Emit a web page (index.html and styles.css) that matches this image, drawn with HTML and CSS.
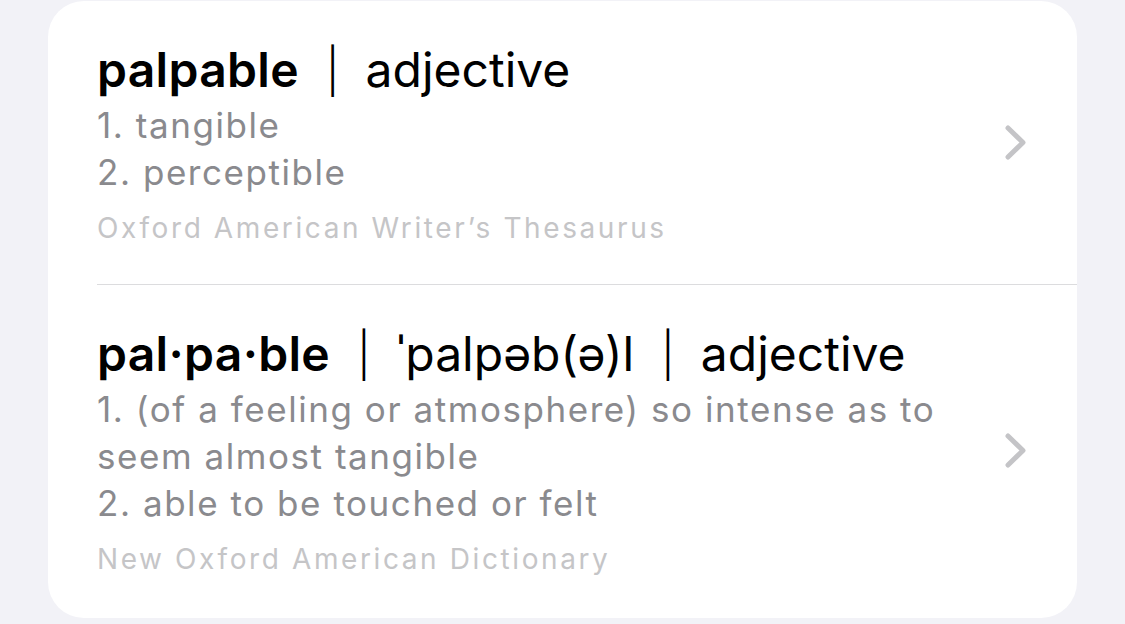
FILE: index.html
```html
<!DOCTYPE html>
<html>
<head>
<meta charset="utf-8">
<link rel="stylesheet" href="styles.css">
</head>
<body>
<div class="card">
  <div class="row row-first">
    <div class="entry">
      <div class="title"><span class="word">palpable</span><span class="bar">|</span><span class="pos">adjective</span></div>
      <div class="def">1. tangible</div>
      <div class="def">2. perceptible</div>
      <div class="source">Oxford American Writer’s Thesaurus</div>
    </div>
    <svg class="chev" width="21" height="35" viewBox="0 0 21 35"><polyline points="3,3 18,17.5 3,32" fill="none" stroke="#c4c4c7" stroke-width="5" stroke-linecap="round" stroke-linejoin="round"/></svg>
  </div>
  <div class="row">
    <div class="entry">
      <div class="title"><span class="word">pal·pa·ble</span><span class="bar">|</span><span class="pos pron">ˈpalpəb(ə)l</span><span class="bar">|</span><span class="pos">adjective</span></div>
      <div class="def">1. (of a feeling or atmosphere) so intense as to seem almost tangible</div>
      <div class="def">2. able to be touched or felt</div>
      <div class="source">New Oxford American Dictionary</div>
    </div>
    <svg class="chev" width="21" height="35" viewBox="0 0 21 35"><polyline points="3,3 18,17.5 3,32" fill="none" stroke="#c4c4c7" stroke-width="5" stroke-linecap="round" stroke-linejoin="round"/></svg>
  </div>
</div>
</body>
</html>
```

FILE: styles.css
```css
html, body {
  margin: 0;
  padding: 0;
  background: #f2f2f7;
}
body {
  padding: 1px 0 0 48px;
  font-family: Inter, "Noto Sans", "DejaVu Sans", sans-serif;
}
.card {
  width: 1029px;
  height: 617px;
  background: #ffffff;
  border-radius: 36px;
  box-sizing: border-box;
}
.row {
  display: flex;
  align-items: center;
  margin-left: 49px;
  padding-right: 51px;
  box-sizing: border-box;
}
.row-first {
  height: 284px;
  border-bottom: 1px solid #dcdcde;
}
.entry {
  flex: 1;
  padding: 39px 0 39px 0;
}
.title {
  font-size: 48px;
  line-height: 60px;
  color: #000;
  white-space: nowrap;
}
.word {
  font-weight: 600;
  letter-spacing: 0.3px;
}
.bar {
  font-size: 44px;
  font-weight: 300;
  line-height: 0;
  margin: 0 26px 0 27px;
}
.pron {
  letter-spacing: 0;
}
.def {
  font-size: 35px;
  line-height: 47px;
  letter-spacing: 1.55px;
  color: #8a8a8e;
}
.title + .def {
  margin-top: 2px;
}
.source {
  font-size: 28px;
  line-height: 36px;
  letter-spacing: 2.6px;
  color: #c5c5c7;
  margin-top: 14px;
}
.chev {
  flex: none;
  margin-left: 30px;
}
```
